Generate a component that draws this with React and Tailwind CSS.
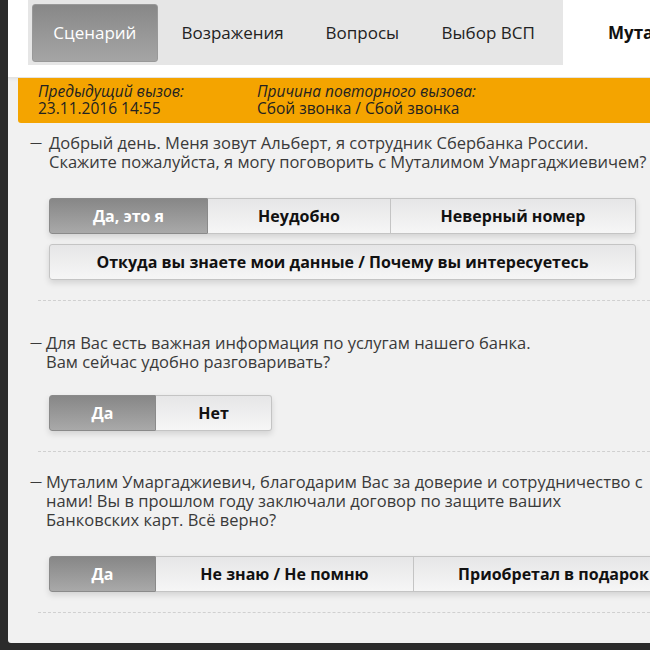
import React from "react";

const font = { fontFamily: '"Open Sans", "Noto Sans", sans-serif' };

function Seg({ items, widths }) {
  return (
    <div className="flex w-fit h-[36px] shadow-[0_3px_6px_rgba(0,0,0,0.13)] rounded-[3px]">
      {items.map((t, i) => {
        const active = i === 0;
        const first = i === 0;
        const last = i === items.length - 1;
        return (
          <div
            key={i}
            style={{ width: widths[i] }}
            className={
              "flex shrink-0 items-center justify-center text-[16px] font-bold border whitespace-nowrap " +
              (active
                ? "bg-gradient-to-b from-[#878787] to-[#a9a9a9] text-white border-[#8a8a8a] "
                : "bg-gradient-to-b from-[#e6e6e7] to-[#f6f6f6] text-[#111] border-[#c4c4c4] ") +
              (first ? "rounded-l-[3px] " : "border-l-0 ") +
              (last ? "rounded-r-[3px]" : "")
            }
          >
            {t}
          </div>
        );
      })}
    </div>
  );
}

function Question({ lines, children, pt, indent }) {
  return (
    <div className={"pl-[22px] " + pt}>
      <div className="flex text-[16.5px] leading-[19px] text-[#3a3a3a]">
        <span className={"shrink-0 text-[12px] leading-[19px] " + indent}>—</span>
        <div className="whitespace-nowrap">
          {lines.map((l, i) => (
            <div key={i}>{l}</div>
          ))}
        </div>
      </div>
      {children}
    </div>
  );
}

export default function App() {
  return (
    <div style={font} className="w-[650px] h-[650px] overflow-hidden bg-[#2b2b2b] flex">
      <div className="w-[8px] shrink-0" />
      <div className="flex-1 min-w-0 flex flex-col h-[643px] bg-[#f1f1f1] rounded-bl-[3px] overflow-hidden">
        <div className="h-[78px] bg-white shrink-0 flex border-b border-[#e3e3e3] shadow-[0_1px_3px_rgba(0,0,0,0.08)] overflow-hidden">
          <div className="ml-[20px] w-[535px] shrink-0 h-[65px] bg-[#e6e6e6] flex items-start p-[4px] text-[17px] text-[#222]">
            <div className="w-[126px] h-[58px] rounded-[3px] bg-gradient-to-b from-[#888] to-[#a5a5a5] border border-[#999] text-white flex items-center justify-center">
              Сценарий
            </div>
            <div className="w-[150px] h-[58px] flex items-center justify-center">Возражения</div>
            <div className="w-[110px] h-[58px] flex items-center justify-center">Вопросы</div>
            <div className="w-[142px] h-[58px] flex items-center justify-center">Выбор ВСП</div>
          </div>
          <div className="ml-[45px] h-[65px] flex items-center text-[17px] font-bold text-[#111] whitespace-nowrap">
            Муталим
          </div>
        </div>
        <div className="ml-[10px] h-[45px] shrink-0 bg-[#f4a400] rounded-bl-[3px] flex pl-[20px] pt-[5px] text-[15.5px] leading-[17px] text-[#222] whitespace-nowrap">
          <div className="w-[219px]">
            <div className="italic">Предыдущий вызов:</div>
            <div>23.11.2016 14:55</div>
          </div>
          <div>
            <div className="italic">Причина повторного вызова:</div>
            <div>Сбой звонка / Сбой звонка</div>
          </div>
        </div>

        <Question
          pt="pt-[10px]"
          indent="w-[19px]"
          lines={[
            "Добрый день. Меня зовут Альберт, я сотрудник Сбербанка России.",
            "Скажите пожалуйста, я могу поговорить с Муталимом Умаргаджиевичем?",
          ]}
        >
          <div className="ml-[19px] mt-[27px] w-[587px]">
            <Seg items={["Да, это я", "Неудобно", "Неверный номер"]} widths={[159, 183, 245]} />
            <div className="mt-[10px] h-[36px] flex items-center justify-center text-[16px] font-bold text-[#111] border border-[#c4c4c4] rounded-[3px] bg-gradient-to-b from-[#e6e6e7] to-[#f6f6f6] shadow-[0_3px_6px_rgba(0,0,0,0.13)]">
              Откуда вы знаете мои данные / Почему вы интересуетесь
            </div>
          </div>
        </Question>
        <div className="ml-[30px] mt-[20px] border-t border-dashed border-[#d0d0d0]" />

        <Question
          pt="pt-[32px]"
          indent="w-[16px]"
          lines={["Для Вас есть важная информация по услугам нашего банка.", "Вам сейчас удобно разговаривать?"]}
        >
          <div className="ml-[19px] mt-[24px]">
            <Seg items={["Да", "Нет"]} widths={[107, 116]} />
          </div>
        </Question>
        <div className="ml-[30px] mt-[20px] border-t border-dashed border-[#d0d0d0]" />

        <Question
          pt="pt-[20px]"
          indent="w-[16px]"
          lines={[
            "Муталим Умаргаджиевич, благодарим Вас за доверие и сотрудничество с",
            "нами! Вы в прошлом году заключали договор по защите ваших",
            "Банковских карт. Всё верно?",
          ]}
        >
          <div className="ml-[19px] mt-[27px]">
            <Seg items={["Да", "Не знаю / Не помню", "Приобретал в подарок"]} widths={[107, 258, 280]} />
          </div>
        </Question>
        <div className="ml-[30px] mt-[20px] border-t border-dashed border-[#d0d0d0]" />
      </div>
    </div>
  );
}
